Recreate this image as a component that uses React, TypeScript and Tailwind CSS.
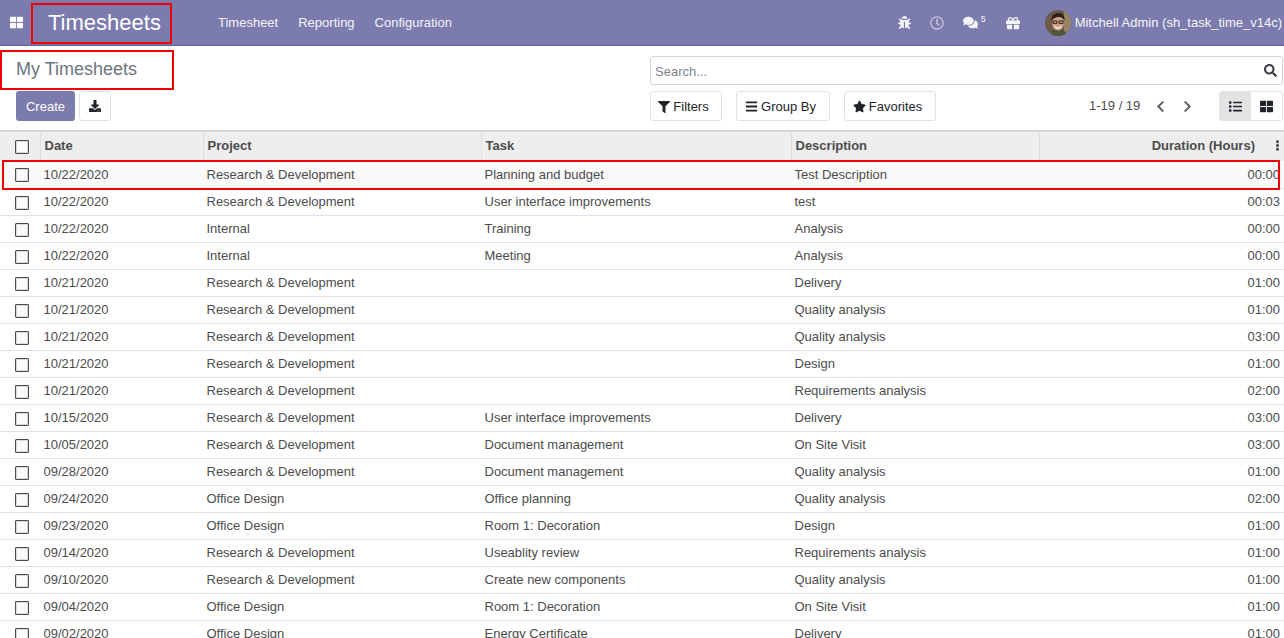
import React from 'react';
import { FaBug, FaComments, FaGift, FaDownload, FaFilter, FaBars, FaStar, FaSearch, FaChevronLeft, FaChevronRight, FaList, FaThLarge, FaEllipsisV, FaRegClock } from 'react-icons/fa';

const rows = [
  ['10/22/2020', 'Research & Development', 'Planning and budget', 'Test Description', '00:00'],
  ['10/22/2020', 'Research & Development', 'User interface improvements', 'test', '00:03'],
  ['10/22/2020', 'Internal', 'Training', 'Analysis', '00:00'],
  ['10/22/2020', 'Internal', 'Meeting', 'Analysis', '00:00'],
  ['10/21/2020', 'Research & Development', '', 'Delivery', '01:00'],
  ['10/21/2020', 'Research & Development', '', 'Quality analysis', '01:00'],
  ['10/21/2020', 'Research & Development', '', 'Quality analysis', '03:00'],
  ['10/21/2020', 'Research & Development', '', 'Design', '01:00'],
  ['10/21/2020', 'Research & Development', '', 'Requirements analysis', '02:00'],
  ['10/15/2020', 'Research & Development', 'User interface improvements', 'Delivery', '03:00'],
  ['10/05/2020', 'Research & Development', 'Document management', 'On Site Visit', '03:00'],
  ['09/28/2020', 'Research & Development', 'Document management', 'Quality analysis', '01:00'],
  ['09/24/2020', 'Office Design', 'Office planning', 'Quality analysis', '02:00'],
  ['09/23/2020', 'Office Design', 'Room 1: Decoration', 'Design', '01:00'],
  ['09/14/2020', 'Research & Development', 'Useablity review', 'Requirements analysis', '01:00'],
  ['09/10/2020', 'Research & Development', 'Create new components', 'Quality analysis', '01:00'],
  ['09/04/2020', 'Office Design', 'Room 1: Decoration', 'On Site Visit', '01:00'],
  ['09/02/2020', 'Office Design', 'Energy Certificate', 'Delivery', '01:00'],
];

const Checkbox = () => (
  <div className="w-[14px] h-[14px] border border-[#4c4c4c] bg-[#fafafa] rounded-[1px] shadow-[inset_0_0_0_1px_#d8d8d8]" />
);

const Avatar = () => (
  <svg width="26" height="26" viewBox="0 0 26 26" className="rounded-full shrink-0">
    <rect width="26" height="26" fill="#6d5a48" />
    <rect x="19" width="7" height="26" fill="#9a8562" />
    <path d="M5 26c0-5 4-7 8-7s9 2 9 7z" fill="#4d5a3c" />
    <ellipse cx="13" cy="13" rx="6" ry="7.500" fill="#cf9f86" />
    <path d="M6.500 11C6 5 10 3 14 3s6 3 5.500 8c-1-3-3-4-6-4s-5 1-7 4z" fill="#2a211d" />
    <path d="M8 11h4v2.400H8zM14 11h4v2.400h-4z" fill="none" stroke="#1e1a18" strokeWidth="0.900" />
    <path d="M9.500 16.500c2 2 5 2 7 0" stroke="#f7ece2" strokeWidth="1.400" fill="none" />
  </svg>
);

const ToolButton = ({ icon, label, width }: { icon: React.ReactNode; label: string; width: string }) => (
  <button className={`h-[30px] pt-[1px] pr-[5px] ${width} flex items-center justify-center gap-[3px] border border-[#dee2e6] rounded-[3px] bg-white text-[13px] text-[#212529]`}>
    {icon}
    {label}
  </button>
);

export default function App() {
  return (
    <div className="relative w-[1284px] h-[638px] overflow-hidden bg-white font-['Liberation_Sans',Arial,sans-serif] text-[13px] text-[#4c4c4c]">
      <nav className="h-[46px] bg-[#7c7bad] border-b border-[#5f5e97] flex items-center text-white">
        <FaThLarge className="ml-[10px] text-[13px]" />
        <span className="ml-[25px] w-[163px] text-[22px] leading-none">Timesheets</span>
        <div className="ml-[-3px] flex gap-[20px] text-[13px] text-[#f3f3f8]">
          <span className="ml-[10px]">Timesheet</span>
          <span>Reporting</span>
          <span>Configuration</span>
        </div>
        <div className="ml-auto flex items-center text-[#f5f5f9]">
          <FaBug className="text-[13px]" />
          <FaRegClock className="ml-[19px] text-[14px] text-[#c5c5dc]" />
          <FaComments className="ml-[19px] text-[15px]" />
          <span className="ml-[3px] mb-[6px] text-[9px] leading-none">5</span>
          <FaGift className="ml-[20px] text-[14px]" />
          <div className="ml-[25px]"><Avatar /></div>
          <span className="ml-[4px] mr-[2px] text-[13px] whitespace-nowrap">Mitchell Admin (sh_task_time_v14c)</span>
        </div>
      </nav>

      <div className="h-[86px] flex border-b-2 border-[#d5d6d9]">
        <div className="w-[650px] shrink-0 pl-[16px]">
          <h1 className="mt-[13px] text-[18px] leading-[20px] text-[#6c757d] font-normal">My Timesheets</h1>
          <div className="mt-[12px] flex gap-[4px]">
            <button className="w-[59px] h-[30px] pt-[1px] rounded-[3px] bg-[#7c7bad] text-white text-[13px]">Create</button>
            <button className="w-[32px] h-[30px] flex items-center justify-center rounded-[3px] border border-[#dee2e6] text-[#212529]">
              <FaDownload className="text-[12px]" />
            </button>
          </div>
        </div>
        <div className="flex-1 min-w-0 pr-[1px]">
          <div className="mt-[10px] h-[29px] border border-[#ced4da] rounded-[3px] flex items-center justify-between pl-[4px] pr-[5px]">
            <span className="pt-[2px] text-[13px] text-[#7d848b]">Search...</span>
            <FaSearch className="text-[13px] text-[#3a3f44]" />
          </div>
          <div className="mt-[6px] flex items-center">
            <ToolButton icon={<FaFilter className="text-[12px]" />} label="Filters" width="w-[72px]" />
            <div className="ml-[14px]">
              <ToolButton icon={<FaBars className="text-[13px]" />} label="Group By" width="w-[94px]" />
            </div>
            <div className="ml-[14px]">
              <ToolButton icon={<FaStar className="text-[13px]" />} label="Favorites" width="w-[92px]" />
            </div>
            <span className="ml-[153px] text-[13px] text-[#4c4c4c] whitespace-nowrap">1-19 / 19</span>
            <FaChevronLeft className="ml-[14px] text-[13px] text-[#5f6367]" />
            <FaChevronRight className="ml-[14px] text-[13px] text-[#5f6367]" />
            <div className="ml-auto flex h-[30px] border border-[#dee2e6] rounded-[3px] overflow-hidden text-[#212529]">
              <div className="w-[31px] bg-[#e2e3e5] flex items-center justify-center"><FaList className="text-[13px]" /></div>
              <div className="w-[31px] flex items-center justify-center"><FaThLarge className="text-[13px]" /></div>
            </div>
          </div>
        </div>
      </div>

      <table className="w-[1284px] table-fixed border-collapse">
        <colgroup>
          <col className="w-[40px]" />
          <col className="w-[163px]" />
          <col className="w-[278px]" />
          <col className="w-[310px]" />
          <col className="w-[248px]" />
          <col className="w-[245px]" />
        </colgroup>
        <thead>
          <tr className="h-[29px] bg-[#eeeeee] text-[#4c4c4c] text-[13px] font-bold">
            <th className="pl-[15px]"><Checkbox /></th>
            <th className="text-left pl-[4px] pb-[2px] border-l border-[#dfdfdf]">Date</th>
            <th className="text-left pl-[4px] pb-[2px] border-l border-[#dfdfdf]">Project</th>
            <th className="text-left pl-[4px] pb-[2px] border-l border-[#dfdfdf]">Task</th>
            <th className="text-left pl-[4px] pb-[2px] border-l border-[#dfdfdf]">Description</th>
            <th className="pb-[2px] border-l border-[#dfdfdf]">
              <div className="flex items-center justify-end">
                <span>Duration (Hours)</span>
                <FaEllipsisV className="ml-[17px] mr-[1px] text-[11px]" />
              </div>
            </th>
          </tr>
        </thead>
        <tbody>
          {rows.map((r, i) => (
            <tr key={i} className={`h-[27px] border-b border-[#dee2e6] ${i === 0 ? 'bg-[#fafafa]' : ''}`}>
              <td className="pl-[15px] pt-[2px]"><Checkbox /></td>
              <td className="pl-[3.5px]">{r[0]}</td>
              <td className="pl-[3.5px]">{r[1]}</td>
              <td className="pl-[3.5px]">{r[2]}</td>
              <td className="pl-[3.5px]">{r[3]}</td>
              <td className="text-right pr-[4px]">{r[4]}</td>
            </tr>
          ))}
        </tbody>
      </table>

      <div className="absolute left-[31px] top-[3px] w-[141px] h-[41px] border-2 border-[#f00000]" />
      <div className="absolute left-0 top-[50px] w-[174px] h-[40px] border-2 border-[#f00000]" />
      <div className="absolute left-[2px] top-[160px] w-[1278px] h-[30px] border-2 border-[#f00000]" />
    </div>
  );
}
